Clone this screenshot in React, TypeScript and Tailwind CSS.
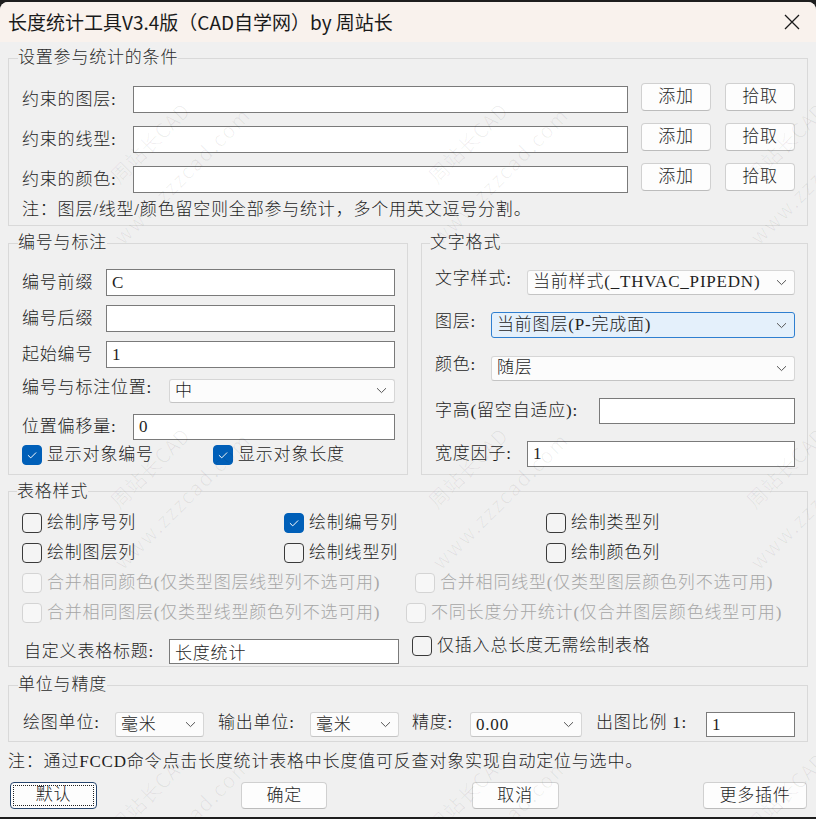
import clsx from 'clsx';

type FieldProps = { w: string; h?: string; value?: string };

// classic sunken edit box
const Field = ({ w, h = 'h-[27px]', value = '' }: FieldProps) => (
  <input
    readOnly
    defaultValue={value}
    className={clsx(
      w,
      h,
      'shrink-0 border border-[#7a7a7a] bg-white px-[5px] leading-none text-[#1f1f1f] outline-none'
    )}
  />
);

const Chevron = () => (
  <svg width="11" height="7" viewBox="0 0 11 7" className="shrink-0">
    <path d="M1 1.2 L5.5 5.6 L10 1.2" fill="none" stroke="#555" strokeWidth="1" />
  </svg>
);

type ComboProps = { w: string; h?: string; value: string; focused?: boolean };

const Combo = ({ w, h = 'h-[25px]', value, focused = false }: ComboProps) => (
  <div
    className={clsx(
      w,
      h,
      'flex shrink-0 items-center justify-between rounded-[3px] border pl-[5px] pr-[7px]',
      focused
        ? 'border-[#2f7fd0] bg-[#e4f0fb]'
        : 'border-[#d6d6d6] border-b-[#c4c4c4] bg-[#fcfcfc]'
    )}
  >
    <span className="truncate">{value}</span>
    <Chevron />
  </div>
);

type CheckProps = { label: string; checked?: boolean; disabled?: boolean; className?: string };

const Check = ({ label, checked = false, disabled = false, className }: CheckProps) => (
  <label
    className={clsx(
      'flex h-[20px] shrink-0 items-center gap-[5px] whitespace-nowrap',
      disabled ? 'text-[#a6a6a6]' : 'text-[#1f1f1f]',
      className
    )}
  >
    <span
      className={clsx(
        'flex h-[20px] w-[20px] shrink-0 items-center justify-center rounded-[4px] border',
        checked
          ? 'border-[#005fb8] bg-[#005fb8]'
          : disabled
            ? 'border-[#d4d4d4] bg-[#f7f7f7]'
            : 'border-[#3a3a3a] bg-[#f4f4f4]'
      )}
    >
      {checked && (
        <svg width="20" height="20" viewBox="0 0 20 20">
          <path d="M5.5 10.2 L8.6 13.2 L14.6 7.2" fill="none" stroke="#fff" strokeWidth="1.1" />
        </svg>
      )}
    </span>
    <span>{label}</span>
  </label>
);

type BtnProps = { label: string; w: string; h?: string; className?: string };

const Btn = ({ label, w, h = 'h-[28px]', className }: BtnProps) => (
  <button
    className={clsx(
      w,
      h,
      'shrink-0 rounded-[4px] border border-[#d0d0d0] border-b-[#bcbcbc] bg-[#fdfdfd] text-[#1f1f1f]',
      className
    )}
  >
    {label}
  </button>
);

const Group = ({
  title,
  className,
  children,
  legendClass = 'ml-[9px]',
}: {
  title: string;
  className?: string;
  children: React.ReactNode;
  legendClass?: string;
}) => (
  <fieldset className={clsx('min-w-0 border border-[#d9d9d9]', className)}>
    <legend className={clsx('leading-[22px] text-[#2a2a2a]', legendClass)}>{title}</legend>
    {children}
  </fieldset>
);

// site stamp repeated across the dialog
const stamps: { x: number; y: number }[] = [];
for (let j = 0; j < 3; j++) {
  for (let i = 0; i < 3; i++) {
    stamps.push({ x: 166 + i * 318, y: 157 + j * 325 });
  }
}

const Watermark = () => (
  <div className="pointer-events-none absolute inset-0 overflow-hidden">
    {stamps.map((s, k) => (
      <div
        key={k}
        className="absolute flex w-[220px] -translate-x-1/2 -translate-y-1/2 -rotate-45 flex-col items-center gap-[20px] text-[20px] leading-[26px] text-black/[0.07]"
        style={{ left: s.x, top: s.y, fontFamily: '"Noto Sans CJK SC", sans-serif' }}
      >
        <span>周站长CAD</span>
        <span className="tracking-[2px]">www.zzzcad.com</span>
      </div>
    ))}
  </div>
);

export default function App() {
  return (
    <div
      className="h-[819px] w-[816px] overflow-hidden bg-[#1e1e1e] text-[17px] font-light tracking-[0.8px] text-[#1f1f1f]"
      style={{ fontFamily: '"Liberation Serif", "Noto Sans CJK SC", serif' }}
    >
      <div className="relative mt-[2px] flex h-[815px] flex-col overflow-hidden rounded-t-[8px] bg-[#f0f0f0]">
        {/* title bar */}
        <div className="flex h-[40px] shrink-0 items-center justify-between bg-[#f9f2ed] pl-[8px] pr-[16px]">
          <span
            className="text-[19px] font-normal tracking-normal text-[#1a1a1a]"
            style={{ fontFamily: '"Noto Sans CJK SC", sans-serif' }}
          >
            长度统计工具V3.4版（CAD自学网）by 周站长
          </span>
          <svg width="16" height="16" viewBox="0 0 16 16">
            <path d="M1 1 L15 15 M15 1 L1 15" stroke="#1a1a1a" strokeWidth="1.3" />
          </svg>
        </div>

        <div className="flex flex-col px-[8px] pt-[5px]">
          {/* filter conditions */}
          <Group title="设置参与统计的条件">
            <div className="flex flex-col gap-[13px] pl-[13px] pt-[17px]">
              {['约束的图层:', '约束的线型:', '约束的颜色:'].map((lbl) => (
                <div key={lbl} className="flex h-[27px] items-start">
                  <span className="w-[111px] shrink-0 self-center">{lbl}</span>
                  <Field w="w-[495px]" />
                  <Btn label="添加" w="w-[70px]" className="-mt-[3px] ml-[13px]" />
                  <Btn label="拾取" w="w-[70px]" className="-mt-[3px] ml-[14px]" />
                </div>
              ))}
            </div>
            <p className="mt-[6px] pb-[4px] pl-[13px] leading-[22px]">
              注：图层/线型/颜色留空则全部参与统计，多个用英文逗号分割。
            </p>
          </Group>

          <div className="mt-[6px] grid grid-cols-[400px_387px] gap-x-[13px]">
            {/* numbering */}
            <Group title="编号与标注">
              <div className="flex flex-col pl-[13px] pt-[15px] pb-[9px]">
                <div className="flex items-center">
                  <span className="w-[84px] shrink-0">编号前缀</span>
                  <Field w="w-[289px]" value="C" />
                </div>
                <div className="mt-[9px] flex items-center">
                  <span className="w-[84px] shrink-0">编号后缀</span>
                  <Field w="w-[289px]" />
                </div>
                <div className="mt-[9px] flex items-center">
                  <span className="w-[84px] shrink-0">起始编号</span>
                  <Field w="w-[289px]" value="1" />
                </div>
                <div className="mt-[10px] flex items-center">
                  <span className="w-[147px] shrink-0 -translate-y-[3px]">编号与标注位置:</span>
                  <Combo w="w-[226px]" h="h-[24px]" value="中" />
                </div>
                <div className="mt-[10px] flex items-center">
                  <span className="w-[111px] shrink-0">位置偏移量:</span>
                  <Field w="w-[262px]" h="h-[26px]" value="0" />
                </div>
                <div className="mt-[5px] flex items-center">
                  <Check label="显示对象编号" checked className="w-[191px]" />
                  <Check label="显示对象长度" checked />
                </div>
              </div>
            </Group>

            {/* text format */}
            <Group title="文字格式" legendClass="ml-[8px]">
              <div className="flex flex-col gap-[17px] pl-[13px] pt-[15px]">
                <div className="flex h-[26px] items-center">
                  <span className="w-[92px] shrink-0 -translate-y-[3px]">文字样式:</span>
                  <Combo w="w-[268px]" value="当前样式(_THVAC_PIPEDN)" />
                </div>
                <div className="flex h-[26px] items-center">
                  <span className="w-[56px] shrink-0 -translate-y-[3px]">图层:</span>
                  <Combo w="w-[304px]" h="h-[26px]" value="当前图层(P-完成面)" focused />
                </div>
                <div className="flex h-[26px] items-center">
                  <span className="w-[56px] shrink-0 -translate-y-[3px]">颜色:</span>
                  <Combo w="w-[304px]" value="随层" />
                </div>
                <div className="flex h-[26px] items-center">
                  <span className="w-[164px] shrink-0">字高(留空自适应):</span>
                  <Field w="w-[196px]" h="h-[26px]" />
                </div>
                <div className="flex h-[26px] items-center">
                  <span className="w-[92px] shrink-0">宽度因子:</span>
                  <Field w="w-[268px]" h="h-[26px]" value="1" />
                </div>
              </div>
            </Group>
          </div>

          {/* table style */}
          <Group title="表格样式" className="mt-[6px]" legendClass="ml-[8px]">
            <div className="flex flex-col gap-[10px] pl-[13px] pt-[10px]">
              <div className="grid grid-cols-[262px_262px_auto]">
                <Check label="绘制序号列" />
                <Check label="绘制编号列" checked />
                <Check label="绘制类型列" />
              </div>
              <div className="grid grid-cols-[262px_262px_auto]">
                <Check label="绘制图层列" />
                <Check label="绘制线型列" />
                <Check label="绘制颜色列" />
              </div>
              <div className="flex">
                <Check label="合并相同颜色(仅类型图层线型列不选可用)" disabled className="w-[393px]" />
                <Check label="合并相同线型(仅类型图层颜色列不选可用)" disabled />
              </div>
              <div className="flex">
                <Check label="合并相同图层(仅类型线型颜色列不选可用)" disabled className="w-[384px]" />
                <Check label="不同长度分开统计(仅合并图层颜色线型可用)" disabled />
              </div>
            </div>
            <div className="mt-[16px] flex items-start pb-[2px] pl-[13px]">
              <span className="w-[147px] shrink-0 self-center pl-[2px]">自定义表格标题:</span>
              <Field w="w-[230px]" h="h-[25px]" value="长度统计" />
              <Check label="仅插入总长度无需绘制表格" className="-mt-[3px] ml-[13px]" />
            </div>
          </Group>

          {/* units */}
          <Group title="单位与精度" className="mt-[7px]">
            <div className="flex items-center pb-[3px] pl-[14px] pt-[16px]">
              <span className="w-[92px] shrink-0 -translate-y-[2px]">绘图单位:</span>
              <Combo w="w-[89px]" value="毫米" />
              <span className="ml-[14px] w-[92px] shrink-0 -translate-y-[2px]">输出单位:</span>
              <Combo w="w-[89px]" value="毫米" />
              <span className="ml-[13px] w-[58px] shrink-0 -translate-y-[2px]">精度:</span>
              <Combo w="w-[112px]" value="0.00" />
              <span className="ml-[14px] w-[110px] shrink-0 -translate-y-[2px]">出图比例 1:</span>
              <Field w="w-[89px]" h="h-[25px]" value="1" />
            </div>
          </Group>

          <p className="mt-[9px] leading-[22px]">
            注：通过FCCD命令点击长度统计表格中长度值可反查对象实现自动定位与选中。
          </p>

          <div className="mt-[9px] flex justify-between pl-[2px] pr-[1px]">
            {/* default button carries the keyboard focus ring */}
            <div className="flex h-[27px] w-[87px] items-center justify-center rounded-[4px] border-[1.5px] border-[#27466e] bg-[#fdfdfd] p-[2px]">
              <div className="flex h-full w-full items-center justify-center border border-dotted border-[#222]">
                默认
              </div>
            </div>
            <Btn label="确定" w="w-[86px]" h="h-[27px]" />
            <Btn label="取消" w="w-[87px]" h="h-[27px]" />
            <Btn label="更多插件" w="w-[104px]" h="h-[27px]" />
          </div>
        </div>

        <Watermark />
      </div>
    </div>
  );
}
